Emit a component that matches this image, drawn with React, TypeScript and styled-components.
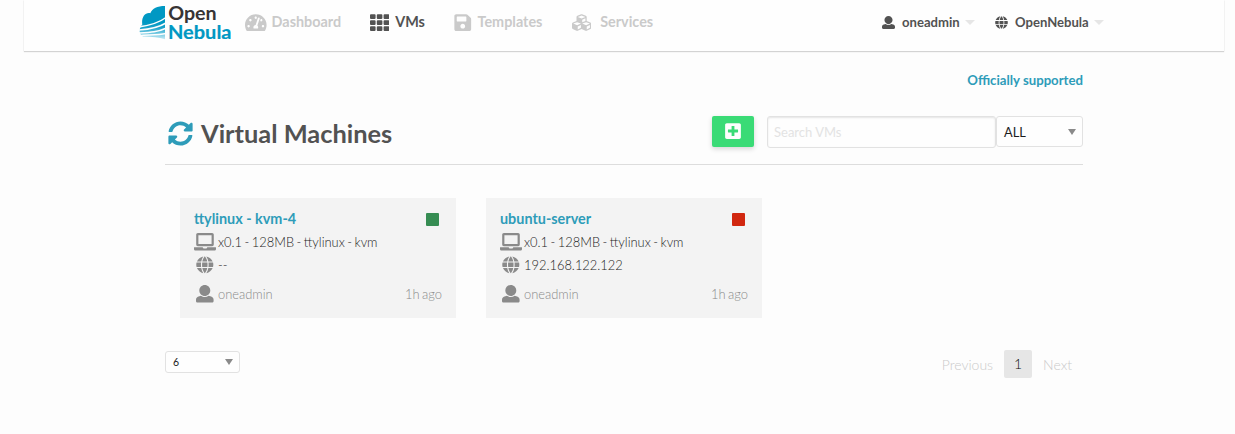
import React from "react";
import styled, { createGlobalStyle } from "styled-components";
import { FaTachometerAlt, FaTh, FaSave, FaCubes, FaSyncAlt, FaPlusSquare } from "react-icons/fa";

const GlobalStyle = createGlobalStyle`
  *, *::before, *::after { box-sizing: border-box; }
  body {
    margin: 0;
    background: #fdfdfd;
    color: #525252;
    font-family: Lato, "Liberation Sans", sans-serif;
    font-size: 14px;
    font-weight: 300;
  }
`;

const Page = styled.div`
  height: 434px;
  overflow: hidden;
`;

const TopBar = styled.header`
  display: flex;
  width: 1200px;
  height: 51px;
  margin-left: 24px;
  padding: 0 120px 0 115px;
  background: #fefefe;
  box-shadow: 0 1px 1px rgba(10, 10, 10, 0.16), 0 0 1px rgba(10, 10, 10, 0.1);
`;

const Logo = styled.svg`
  flex: none;
  width: 94px;
  height: 42px;
`;

const Nav = styled.nav`
  display: flex;
  height: 45px;
  margin-left: 12px;
`;

const NavItem = styled.a<{ $width: number; $gap: number; $icon?: number; $active?: boolean }>`
  display: flex;
  align-items: center;
  flex: none;
  gap: ${(p) => p.$gap}px;
  width: ${(p) => p.$width}px;
  color: ${(p) => (p.$active ? "#525252" : "#cacaca")};
  font-size: 14.4px;
  font-weight: 700;
  line-height: 18px;
  white-space: nowrap;

  svg {
    flex: none;
    width: ${(p) => p.$icon ?? 19.2}px;
    height: 19.2px;
  }
  span { margin-bottom: 2px; }
`;

const UserMenus = styled.div`
  display: flex;
  height: 45px;
  margin-left: auto;
`;

const UserMenu = styled.a<{ $width: number }>`
  display: flex;
  align-items: center;
  flex: none;
  width: ${(p) => p.$width}px;
  font-size: 13.1px;
  font-weight: 700;
  white-space: nowrap;

  svg { flex: none; width: 13px; height: 13px; margin-right: 7px; }
  span { margin-bottom: 2px; }
  &::after {
    content: "";
    margin: 0 0 1px 5px;
    border: 5px solid transparent;
    border-top-color: #e6e6e6;
    border-bottom: 0;
  }
`;

const Main = styled.main`
  width: 918px;
  margin-left: 165px;
`;

const Support = styled.div`
  height: 64px;
  padding-top: 21px;
  color: #2e9cb9;
  font-size: 13.2px;
  font-weight: 700;
  line-height: 16px;
  text-align: right;
`;

const Heading = styled.div`
  display: flex;
  align-items: flex-start;
  height: 50px;
  border-bottom: 1px solid #dddddd;
`;

const Title = styled.h1`
  display: flex;
  align-items: center;
  flex: 1;
  gap: 8px;
  height: 36px;
  margin: 0;
  padding-left: 3px;
  font-size: 25.4px;
  font-weight: 700;

  svg { width: 25px; height: 25px; color: #2e9cb9; }
`;

const AddButton = styled.button`
  display: flex;
  align-items: center;
  justify-content: center;
  width: 42px;
  height: 31px;
  margin: 1px 13px 0 0;
  padding: 0 0 2px;
  border: 0;
  border-radius: 2px;
  background: #3adb76;
  color: #fefefe;
  box-shadow: 0 2px 5px rgba(0, 0, 0, 0.16);

  svg { width: 18px; height: 18px; }
`;

const SearchInput = styled.input`
  width: 229px;
  height: 32px;
  margin: 1px 0 0;
  padding: 0 6px;
  border: 1px solid #e2e2e2;
  border-radius: 3px;
  background: #fefefe;
  box-shadow: inset 0 1px 2px rgba(10, 10, 10, 0.1);
  font: 400 13px Lato, sans-serif;

  &::placeholder { color: #e3e3e3; opacity: 1; }
`;

const Select = styled.div<{ $small?: boolean }>`
  display: flex;
  align-items: center;
  justify-content: space-between;
  width: ${(p) => (p.$small ? 75 : 87)}px;
  height: ${(p) => (p.$small ? 22 : 31)}px;
  margin-top: 1px;
  padding: 0 6px 0 7px;
  border: 1px solid #e2e2e2;
  border-radius: 3px;
  background: #fefefe;
  color: #1c1c1c;
  font-size: ${(p) => (p.$small ? 10.5 : 12.8)}px;
  font-weight: 400;

  &::after {
    content: "";
    border: 4.5px solid transparent;
    border-top: 6px solid #8a8a8a;
    border-bottom: 0;
  }
`;

const Cards = styled.div`
  display: flex;
  gap: 30px;
  padding: 33px 15px 0;
`;

const Card = styled.article`
  width: 276px;
  height: 120px;
  padding: 9px 14px 0;
  background: #f3f3f3;
`;

const CardTitle = styled.div`
  display: flex;
  align-items: center;
  justify-content: space-between;
  height: 23px;
  color: #2e9cb9;
  font-size: 14.4px;
  font-weight: 700;
`;

const Status = styled.span<{ $color: string }>`
  width: 13px;
  height: 13px;
  margin: 2px 3px 0 0;
  border-radius: 1px;
  background: ${(p) => p.$color};
`;

const CardLine = styled.div<{ $muted?: boolean }>`
  display: flex;
  align-items: center;
  height: 23px;
  margin-top: ${(p) => (p.$muted ? 6 : 0)}px;
  color: ${(p) => (p.$muted ? "#8a8a8a" : "#1c1c1c")};
  font-size: 12.9px;
  word-spacing: -1px;
`;

const LineIcon = styled.span`
  display: flex;
  justify-content: center;
  width: 22px;
  margin: 1px 2px 0 0;
  color: #8a8a8a;

  svg { flex: none; height: 17.6px; }
`;

const Age = styled.span`
  margin-left: auto;
`;

const Footer = styled.footer`
  display: flex;
  justify-content: space-between;
  align-items: flex-start;
  padding-top: 32px;
`;

const Pagination = styled.div`
  display: flex;
  align-items: center;
  height: 28px;
  padding-right: 11px;
  color: #cacaca;
  font-size: 14px;
`;

const CurrentPage = styled.span`
  width: 28px;
  height: 28px;
  margin: 0 11px;
  border-radius: 2px;
  background: #e6e6e6;
  color: #0a0a0a;
  line-height: 28px;
  text-align: center;
`;

const UserIcon = () => (
  <svg viewBox="0 0 512 512" fill="currentColor">
    <path d="M256 0c88.366 0 160 71.634 160 160s-71.634 160-160 160S96 248.366 96 160 167.634 0 256 0zm183.283 333.821l-71.313-17.828c-74.923 53.89-165.738 41.864-223.94 0l-71.313 17.828C29.981 344.505 0 382.903 0 426.955V464c0 26.51 21.49 48 48 48h416c26.51 0 48-21.49 48-48v-37.045c0-44.052-29.981-82.45-72.717-93.134z" />
  </svg>
);

const GlobeIcon = () => (
  <svg viewBox="0 0 512 512" fill="currentColor">
    <path d="M364.215 192h131.43c5.439 20.419 8.354 41.868 8.354 64s-2.915 43.581-8.354 64h-131.43c5.154-43.049 4.939-86.746 0-128zM185.214 352c10.678 53.68 33.173 112.514 70.125 151.992.221.001.44.008.661.008s.44-.008.661-.008c37.012-39.543 59.467-98.414 70.125-151.992H185.214zm174.13-192h125.385C452.802 84.024 384.128 27.305 300.95 12.075c30.238 43.12 48.821 96.332 58.394 147.925zm-27.35 32H180.006c-5.339 41.914-5.345 86.037 0 128h151.989c5.339-41.915 5.345-86.037-.001-128zM152.656 352H27.271c31.926 75.976 100.6 132.695 183.778 147.925-30.246-43.136-48.823-96.35-58.393-147.925zm206.688 0c-9.575 51.605-28.163 104.814-58.394 147.925 83.178-15.23 151.852-71.949 183.778-147.925H359.344zM326.786 160C316.089 106.222 293.549 47.418 256.662 8.008 256.44 8.007 256.221 8 256 8s-.44.007-.661.008C218.33 47.548 195.874 106.42 185.214 160h141.572zM147.785 192H16.355C10.915 212.419 8 233.868 8 256s2.915 43.581 8.354 64h131.43c-4.939-41.254-5.154-84.951.001-128zM152.656 160c9.573-51.593 28.155-104.805 58.394-147.925C127.872 27.305 59.198 84.024 27.271 160h125.385z" />
  </svg>
);

const LaptopIcon = () => (
  <svg viewBox="0 0 640 512" fill="currentColor">
    <path d="M512 64v256H128V64h384m16-64H112C85.5 0 64 21.5 64 48v288c0 26.5 21.5 48 48 48h416c26.5 0 48-21.5 48-48V48c0-26.5-21.5-48-48-48zm100 416H389.5c-3 0-5.5 2.1-5.9 5.1C381.2 436.3 368 448 352 448h-64c-16 0-28.8-11.7-31.6-26.9-.5-3-2.9-5.1-5.9-5.1H12c-6.6 0-12 5.4-12 12v36c0 26.5 21.5 48 48 48h544c26.5 0 48-21.5 48-48v-36c0-6.6-5.4-12-12-12z" />
  </svg>
);

const BrandLogo = () => (
  <Logo viewBox="0 0 94 42">
    <defs>
      <linearGradient id="cloud" x1="0" y1="6" x2="0" y2="39" gradientUnits="userSpaceOnUse">
        <stop offset="0.5" stopColor="#0098c3" />
        <stop offset="0.66" stopColor="#1ba2ca" />
        <stop offset="0.82" stopColor="#6cc5df" />
        <stop offset="1" stopColor="#c2e8f3" />
      </linearGradient>
    </defs>
    <path fill="url(#cloud)" d="M26 6v33.300c-7-2.200-14-2.900-22-2.800C0.500 34.500-1.200 29.500 3.300 24.500 2.200 17.500 6 12 11.300 13.200 13.500 8.500 18 6 26 6Z" />
    <g fill="none" stroke="#fefefe" strokeWidth="1.500">
      <path d="M-1 27C11 25.500 19 23.500 27 17.500" />
      <path d="M-1 30.200C11 29.300 19 28 27 23" />
      <path d="M-1 33.200C11 32.400 19 32 27 28.200" />
      <path d="M-1 35.700C11 34.800 19 35.300 27 33.500" />
    </g>
    <text x="29.200" y="20" textLength="48.500" lengthAdjust="spacingAndGlyphs" fill="#373435" fontFamily="Lato" fontWeight="700" fontSize="19">Open</text>
    <text x="29" y="38.500" textLength="63.500" lengthAdjust="spacingAndGlyphs" fill="#0098c3" stroke="#0098c3" strokeWidth="0.200" fontFamily="Lato" fontWeight="700" fontSize="18">Nebula</text>
  </Logo>
);

type Machine = { name: string; ip: string; color: string };

const machines: Machine[] = [
  { name: "ttylinux - kvm-4", ip: "--", color: "#368c52" },
  { name: "ubuntu-server", ip: "192.168.122.122", color: "#d1270f" },
];

const MachineCard = ({ name, ip, color }: Machine) => (
  <Card>
    <CardTitle>{name}<Status $color={color} /></CardTitle>
    <CardLine><LineIcon><LaptopIcon /></LineIcon>x0.1 - 128MB - ttylinux - kvm</CardLine>
    <CardLine><LineIcon><GlobeIcon /></LineIcon>{ip}</CardLine>
    <CardLine $muted><LineIcon><UserIcon /></LineIcon>oneadmin<Age>1h ago</Age></CardLine>
  </Card>
);

export default function App() {
  return (
    <Page>
      <GlobalStyle />
      <TopBar>
        <BrandLogo />
        <Nav>
          <NavItem $width={125} $gap={5} $icon={21.6}><FaTachometerAlt /><span>Dashboard</span></NavItem>
          <NavItem $width={84} $gap={6} $active><FaTh /><span>VMs</span></NavItem>
          <NavItem $width={118} $gap={6} $icon={17.5}><FaSave /><span>Templates</span></NavItem>
          <NavItem $width={90} $gap={9}><FaCubes /><span>Services</span></NavItem>
        </Nav>
        <UserMenus>
          <UserMenu $width={113}><UserIcon /><span>oneadmin</span></UserMenu>
          <UserMenu $width={109}><GlobeIcon /><span>OpenNebula</span></UserMenu>
        </UserMenus>
      </TopBar>
      <Main>
        <Support>Officially supported</Support>
        <Heading>
          <Title><FaSyncAlt />Virtual Machines</Title>
          <AddButton aria-label="Create"><FaPlusSquare /></AddButton>
          <SearchInput placeholder="Search VMs" />
          <Select>ALL</Select>
        </Heading>
        <Cards>
          {machines.map((m) => <MachineCard key={m.name} {...m} />)}
        </Cards>
        <Footer>
          <Select $small>6</Select>
          <Pagination>Previous<CurrentPage>1</CurrentPage>Next</Pagination>
        </Footer>
      </Main>
    </Page>
  );
}
